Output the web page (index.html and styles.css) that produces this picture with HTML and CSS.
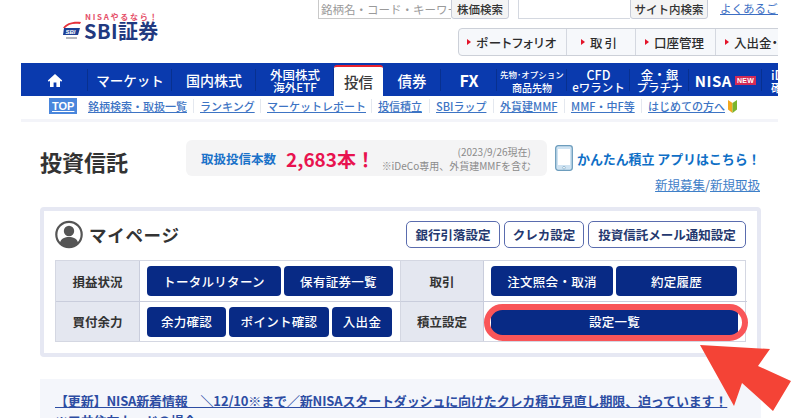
FILE: index.html
```html
<!DOCTYPE html>
<html lang="ja">
<head>
<meta charset="utf-8">
<title>投資信託 | SBI証券</title>
<link rel="stylesheet" href="styles.css">
</head>
<body>
<div class="page">
  <header class="top">
    <div class="logo">
      <svg class="logo-mark" width="20" height="20" viewBox="0 0 20 20">
        <path d="M1 7C4 2 11 0 19 1L18 3C12 2 6 3 3 7Z" fill="#e5323a"/>
        <path d="M2 7h16l-2 7H1Z" fill="#1c3f94"/>
        <text x="3.5" y="12.500" class="logo-mark-text">SBI</text>
        <rect x="4" y="16" width="11" height="2" fill="#b4b6bc"/>
      </svg>
      <div class="logo-text">
        <span class="logo-tag">NISAやるなら！</span>
        <span class="logo-name">SBI証券</span>
      </div>
    </div>
    <div class="tools">
      <div class="searches">
        <div class="search-box code-box">銘柄名・コード・キーワード</div>
        <div class="search-btn code-btn">株価検索</div>
        <div class="search-box site-box"></div>
        <div class="search-btn site-btn">サイト内検索</div>
        <a class="faq" href="#">よくあるご質問</a>
      </div>
      <div class="quick">
        <a class="quick-item q1" href="#"><i class="tri"></i>ポートフォリオ</a>
        <a class="quick-item q2" href="#"><i class="tri"></i>取引</a>
        <a class="quick-item q3" href="#"><i class="tri"></i>口座管理</a>
        <a class="quick-item q4" href="#"><i class="tri"></i>入出金・振替</a>
      </div>
    </div>
  </header>

  <nav class="gnav">
    <a class="gn n-home" href="#">
      <svg width="16" height="15" viewBox="0 0 16 15"><path d="M8 1 .8 7.6l1 1.1L3 7.7V14h3.6V9.6h2.8V14H13V7.7l1.200 1 1-1.100Z" fill="#fff"/></svg>
    </a>
    <a class="gn n-market" href="#">マーケット</a>
    <a class="gn n-jp" href="#">国内株式</a>
    <a class="gn n-fx two" href="#"><span>外国株式</span><span>海外ETF</span></a>
    <a class="gn n-fund active" href="#">投信</a>
    <a class="gn n-bond" href="#">債券</a>
    <a class="gn n-fxx" href="#">FX</a>
    <a class="gn n-opt two tiny" href="#"><span>先物･オプション</span><span>商品先物</span></a>
    <a class="gn n-cfd two" href="#"><span>CFD</span><span>eワラント</span></a>
    <a class="gn n-gold two" href="#"><span>金・銀</span><span>プラチナ</span></a>
    <a class="gn n-nisa" href="#">NISA<b class="new">NEW</b></a>
    <a class="gn n-ideco two" href="#"><span>iDeCo</span><span>確定拠出</span></a>
  </nav>

  <div class="subnav">
    <a class="top-link" href="#">TOP</a>
    <a href="#">銘柄検索・取扱一覧</a>
    <a href="#">ランキング</a>
    <a href="#">マーケットレポート</a>
    <a href="#">投信積立</a>
    <a href="#">SBIラップ</a>
    <a href="#">外貨建MMF</a>
    <a href="#">MMF・中F等</a>
    <a class="last" href="#">はじめての方へ</a>
    <svg class="leaf" width="9" height="13" viewBox="0 0 9 13"><path d="M0 0 4.500 3V13L0 9.500Z" fill="#f2a81d"/><path d="M9 0 4.500 3V13L9 9.500Z" fill="#7ab52c"/></svg>
  </div>

  <main class="content">
    <div class="head-row">
      <h1 class="title">投資信託</h1>
      <div class="info">
        <span class="info-label">取扱投信本数</span>
        <strong class="info-num">2,683本！</strong>
        <span class="info-note"><span>(2023/9/26現在)</span><span>※iDeCo専用、外貨建MMFを含む</span></span>
      </div>
      <div class="app">
        <a class="app-link" href="#">
          <svg width="18" height="26" viewBox="0 0 18 26"><rect x=".7" y=".7" width="16.600" height="24.600" rx="2.500" fill="#cfe3f2" stroke="#6d9dbd" stroke-width="1.300"/><rect x="3" y="4" width="12" height="16" fill="#fff"/><circle cx="9" cy="22.700" r="1.300" fill="#fff" stroke="#6d9dbd" stroke-width=".6"/></svg>
          <span>かんたん積立 アプリはこちら！</span>
        </a>
        <div class="new-links"><a href="#">新規募集</a>/<a href="#">新規取扱</a></div>
      </div>
    </div>

    <section class="card">
      <div class="card-head">
        <div class="mypage">
          <svg width="28" height="29" viewBox="0 0 28 28"><circle cx="14" cy="14" r="12.700" fill="#fff" stroke="#555" stroke-width="2.200"/><circle cx="14" cy="10.500" r="5.200" fill="#555"/><path d="M4.800 22.500C6 17.800 10 16.500 14 16.500s8 1.300 9.200 6A12.700 12.700 0 0 1 4.800 22.500Z" fill="#555"/></svg>
          <h2>マイページ</h2>
        </div>
        <div class="settings">
          <a href="#" class="out o1">銀行引落設定</a>
          <a href="#" class="out o2">クレカ設定</a>
          <a href="#" class="out o3">投資信託メール通知設定</a>
        </div>
      </div>
      <div class="grid">
        <div class="lbl">損益状況</div>
        <div class="cell">
          <a class="btn w134" href="#">トータルリターン</a>
          <a class="btn w109" href="#">保有証券一覧</a>
        </div>
        <div class="lbl">取引</div>
        <div class="cell right">
          <a class="btn w122" href="#">注文照会・取消</a>
          <a class="btn w121" href="#">約定履歴</a>
        </div>
        <div class="lbl lb">買付余力</div>
        <div class="cell lb">
          <a class="btn w79" href="#">余力確認</a>
          <a class="btn w100" href="#">ポイント確認</a>
          <a class="btn w60" href="#">入出金</a>
        </div>
        <div class="lbl lb">積立設定</div>
        <div class="cell right lb ring-cell">
          <a class="btn w247" href="#">設定一覧</a>
          <span class="ring"></span>
        </div>
      </div>
    </section>

    <section class="news">
      <a href="#">【更新】NISA新着情報　＼12/10※まで／新NISAスタートダッシュに向けたクレカ積立見直し期限、迫っています！<br>※三井住友カードの場合</a>
    </section>
  </main>

  <svg class="arrow" width="93" height="68" viewBox="0 0 93 68"><polygon points="0,0 70,4 58,21 91,36 73,66 42,38 34,61" fill="#f44336"/></svg>
</div>
</body>
</html>
```

FILE: styles.css
```css
* { box-sizing: border-box; }
html, body { margin: 0; padding: 0; height: 418px; overflow: hidden; background: #fff; }
body { font-family: "Noto Sans CJK JP", "Noto Sans", sans-serif; color: #333; }
a { color: inherit; text-decoration: none; }

.page { position: relative; width: 800px; height: 418px; overflow: hidden; }

/* header */
.top { display: flex; height: 63px; margin-left: 21px; width: 757px; overflow: hidden; }
.logo { display: flex; align-items: flex-end; width: 297px; padding: 0 0 22px 41px; gap: 2px; flex: none; }
.logo-mark { flex: none; }
.logo-mark-text { font: italic 700 6px "Liberation Sans", sans-serif; fill: #fff; }
.logo-text { display: flex; flex-direction: column; }
.logo-tag { font-size: 8px; line-height: 9px; font-weight: 700; color: #e5506a; letter-spacing: 1.700px; white-space: nowrap; margin-left: 1px; }
.logo-name { font-size: 20px; line-height: 20px; font-weight: 700; color: #21397f; white-space: nowrap; letter-spacing: .4px; }

.tools { flex: 1; min-width: 0; }
.searches { display: flex; height: 20px; margin-top: -1px; align-items: stretch; font-size: 11.500px; white-space: nowrap; }
.searches > * { flex: none; }
.search-box { border: 1px solid #c9c9c9; border-right: 0; color: #9a9a9a; padding: 0 2px; overflow: hidden; line-height: 18px; background: #fff; }
.code-box { width: 133px; }
.site-box { width: 112px; margin-left: 9px; border-color: #d4d8e0; }
.search-btn { background: #f4f4f4; border: 1px solid #c8ccd8; border-radius: 0 0 3px 3px; color: #333; font-weight: 500; text-align: center; line-height: 18px; }
.code-btn { width: 58px; }
.site-btn { width: 78px; }
.faq { margin-left: 12px; color: #3d6fc4; text-decoration: underline; font-size: 11.500px; line-height: 19px; }

.quick { display: flex; margin: 9px 0 0 140px; height: 28px; width: 340px; border: 1px solid #ccd0d8; border-radius: 4px; background: #f6f8fb; }
.quick-item { display: flex; align-items: center; flex: none; font-size: 12.500px; font-weight: 500; color: #2c2c2c; border-right: 1px solid #d4d8e0; padding-left: 8px; white-space: nowrap; overflow: hidden; font-feature-settings: "palt"; }
.q1 { width: 108px; letter-spacing: .7px; }
.q2 { width: 69px; padding-left: 14px; letter-spacing: 2px; }
.q3 { width: 80px; padding-left: 9px; }
.q4 { width: 83px; border-right: 0; padding-left: 9px; }
.tri { width: 0; height: 0; border-left: 4px solid #e3142a; border-top: 3.500px solid transparent; border-bottom: 3.500px solid transparent; margin-right: 5px; flex: none; }

/* global nav */
.gnav { display: flex; height: 33px; margin-left: 21px; width: 757px; background: #0a3aae; overflow: hidden; }
.gn { display: flex; flex-direction: column; align-items: center; justify-content: center; flex: none; height: 33px; padding-top: 3px; padding-bottom: 2px; color: #fff; font-size: 13.500px; font-weight: 500; white-space: nowrap; background: linear-gradient(#08308f, #08308f) right center / 1px 22px no-repeat; }
.gn.two { font-size: 12.500px; line-height: 13px; padding-bottom: 0; }
.gn.two span:last-child { font-size: 11.500px; }
.gn.tiny span { font-size: 8.500px; }
.gn.tiny span:last-child { font-size: 10px; }
.n-home { width: 67px; }
.n-market { width: 84px; }
.n-jp { width: 84px; font-size: 14px; }
.n-fx { width: 78px; }
.n-fund { width: 49px; }
.n-bond { width: 58px; font-size: 14.500px; }
.n-fxx { width: 56px; font-size: 16px; font-weight: 700; }
.n-opt { width: 70px; }
.n-cfd { width: 63px; }
.n-gold { width: 59px; }
.n-nisa { width: 73px; flex-direction: row; gap: 3px; font-size: 15px; font-weight: 700; letter-spacing: .5px; }
.n-ideco { width: 40px; align-items: flex-start; padding-left: 9px; }
.new { background: #d22a56; color: #fff; font-size: 7px; line-height: 9px; padding: 0 2px; letter-spacing: .3px; font-family: "Liberation Sans", sans-serif; }
.gn.active { background: #fff; color: #3a3a3a; border-top: 2px solid #e9232f; border-radius: 3px 3px 0 0; font-size: 14.500px; margin-top: 2px; height: 31px; padding: 0; }

/* sub nav */
.subnav { display: flex; align-items: center; height: 26px; margin-left: 21px; width: 757px; padding: 0 0 3px 28px; border-bottom: 3px solid #f3f4f9; font-size: 11px; font-weight: 500; color: #3d74c4; white-space: nowrap; }
.subnav a { text-decoration: underline; padding: 0 6px; border-right: 1px solid #e4e8ef; line-height: 14px; flex: none; }
.subnav .top-link { background: #4a86dc; color: #fff; font-weight: 700; padding: 1px 3px; border: 0; margin-right: 5px; line-height: 14px; width: 28px; text-align: center; font-family: "Liberation Sans", sans-serif; font-size: 11px; }
.subnav .last { border-right: 0; padding-right: 2px; }
.subnav a:nth-child(2) { width: 112px; padding-right: 0; }
.subnav a:nth-child(3) { width: 67px; padding-left: 6px; }
.subnav a:nth-child(4) { width: 111px; padding-left: 6px; }
.subnav a:nth-child(5) { width: 58px; padding-left: 6px; }
.subnav a:nth-child(6) { width: 64px; padding-left: 6px; }
.subnav a:nth-child(7) { width: 71px; padding-left: 6px; }
.subnav a:nth-child(8) { width: 77px; padding-left: 6px; }
.subnav a.last { width: 86px; padding-left: 6px; }
.leaf { margin-left: 0; flex: none; }

/* content */
.content { margin-left: 40px; width: 721px; }
.head-row { display: flex; height: 85px; padding-top: 18px; }
.title { margin: 0; width: 146px; font-size: 22px; line-height: 30px; font-weight: 700; color: #333; padding-top: 6px; height: 36px; }
.info { display: flex; align-items: center; width: 361px; height: 36px; background: #f4f4f5; border-radius: 6px; padding-left: 15px; }
.info-label { font-size: 12.500px; font-weight: 700; color: #1b72c9; width: 85px; white-space: nowrap; }
.info-num { font-size: 19px; font-weight: 700; color: #e8124f; width: 92px; white-space: nowrap; }
.info-note { display: flex; flex-direction: column; align-items: flex-end; width: 154px; font-size: 10px; line-height: 14px; color: #8b8b8b; white-space: nowrap; margin: 1px 0 0 -1px; }
.app { margin-left: 8px; width: 206px; }
.app-link { display: flex; align-items: center; gap: 4px; color: #0f6fc6; font-size: 13px; font-weight: 700; white-space: nowrap; margin-top: 5px; letter-spacing: -.1px; }
.app-link svg { flex: none; }
.new-links { font-size: 12.500px; line-height: 16px; color: #3a6ea8; text-align: right; padding-right: 1px; margin-top: 6px; }
.new-links a { text-decoration: underline; color: #3f80c8; }

.card { height: 150px; border: 4px solid #e6e8f3; border-radius: 4px; padding: 0 11px; background: #fff; }
.card-head { display: flex; justify-content: space-between; height: 49px; padding-top: 9px; }
.mypage { display: flex; gap: 6px; align-items: flex-start; }
.mypage h2 { margin: 0; font-size: 17.500px; line-height: 29px; font-weight: 700; color: #333; letter-spacing: .7px; }
.settings { display: flex; gap: 4px; padding-top: 1px; }
.out { display: flex; align-items: center; justify-content: center; height: 27px; border: 1px solid #5a6cae; border-radius: 5px; font-size: 12.500px; font-weight: 700; color: #24386f; white-space: nowrap; }
.o1 { width: 94px; }
.o2 { width: 80px; }
.o3 { width: 158px; }

.grid { display: grid; grid-template-columns: 84px 261px 83px 263px; grid-template-rows: 40px 40px; width: 691px; border: 1px solid #d4d7e2; }
.lbl { display: flex; align-items: center; justify-content: center; background: #e4e7f0; font-size: 12.500px; font-weight: 700; color: #333; border-right: 1px solid #c9cddc; }
.cell { display: flex; align-items: center; gap: 3px; padding-left: 7px; border-right: 1px solid #d4d7e2; }
.cell.right { border-right: 0; }
.lb { border-top: 1px solid #c9cddc; }
.btn { display: flex; align-items: center; justify-content: center; flex: none; height: 30px; background: #082a85; color: #fff; border-radius: 4px; font-size: 12.500px; font-weight: 500; white-space: nowrap; letter-spacing: .3px; }
.w134 { width: 134px; }
.w109 { width: 109px; }
.w122 { width: 122px; }
.w121 { width: 121px; }
.w79 { width: 79px; }
.w100 { width: 100px; }
.w60 { width: 60px; }
.w247 { width: 247px; }
.ring-cell { position: relative; }
.ring { position: absolute; left: 0; top: 2px; width: 264px; height: 37px; border: 6px solid #f95558; border-radius: 19px; }

.news { height: 60px; margin-top: 22px; background: #f4f6fb; padding: 12px 0 0 15px; font-size: 13px; line-height: 20px; font-weight: 700; color: #2d4da3; white-space: nowrap; letter-spacing: -.15px; }
.news a { text-decoration: underline; }

.arrow { position: absolute; left: 700px; top: 345px; }
```
